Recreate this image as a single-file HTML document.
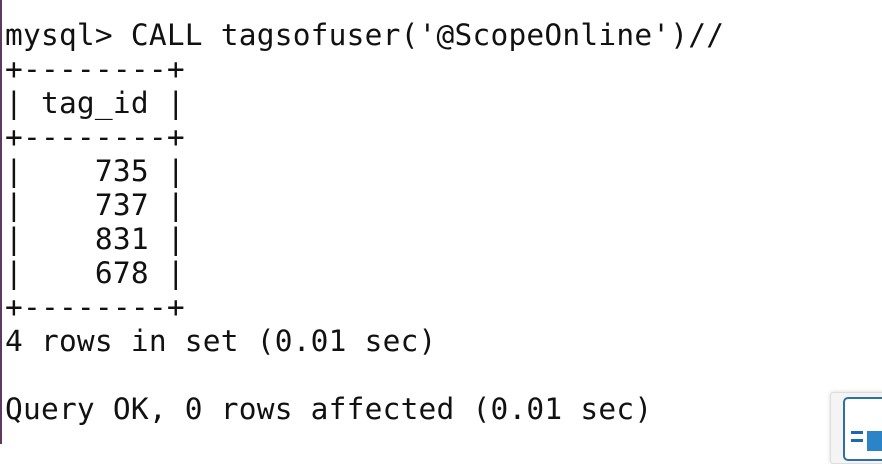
<!DOCTYPE html>
<html><head><style>
html,body{margin:0;padding:0;width:882px;height:444px;overflow:hidden;background:#fff;}
.bar{position:absolute;left:0;top:0;width:2px;height:444px;background:#5e3b5e;}
pre{position:absolute;left:5px;top:18px;margin:0;font-family:"DejaVu Sans Mono","Liberation Mono",monospace;font-size:29.5px;line-height:34px;color:#111;letter-spacing:0.22px;}
.icon{position:absolute;left:830px;top:392px;width:70px;height:70px;background:#f4f4f4;border:1px solid #ddd;border-radius:3px;box-shadow:0 0 4px rgba(0,0,0,0.15);overflow:hidden;}
.icon .in{position:absolute;left:12px;top:4px;width:60px;height:60px;border:2px solid #2f6fa8;border-radius:5px;background:#fff;}
.icon .l1{position:absolute;left:20px;top:38px;width:12px;height:3px;background:#1d6aa8;}
.icon .l2{position:absolute;left:20px;top:46px;width:12px;height:3px;background:#1d6aa8;}
.icon .sq{position:absolute;left:36px;top:38px;width:20px;height:20px;background:#2b84c8;}
</style></head><body>
<div class="bar"></div>
<pre>mysql&gt; CALL tagsofuser('@ScopeOnline')//
+--------+
| tag_id |
+--------+
|    735 |
|    737 |
|    831 |
|    678 |
+--------+
4 rows in set (0.01 sec)

Query OK, 0 rows affected (0.01 sec)</pre>
<div class="icon"><div class="in"></div><div class="l1"></div><div class="l2"></div><div class="sq"></div></div>
</body></html>
